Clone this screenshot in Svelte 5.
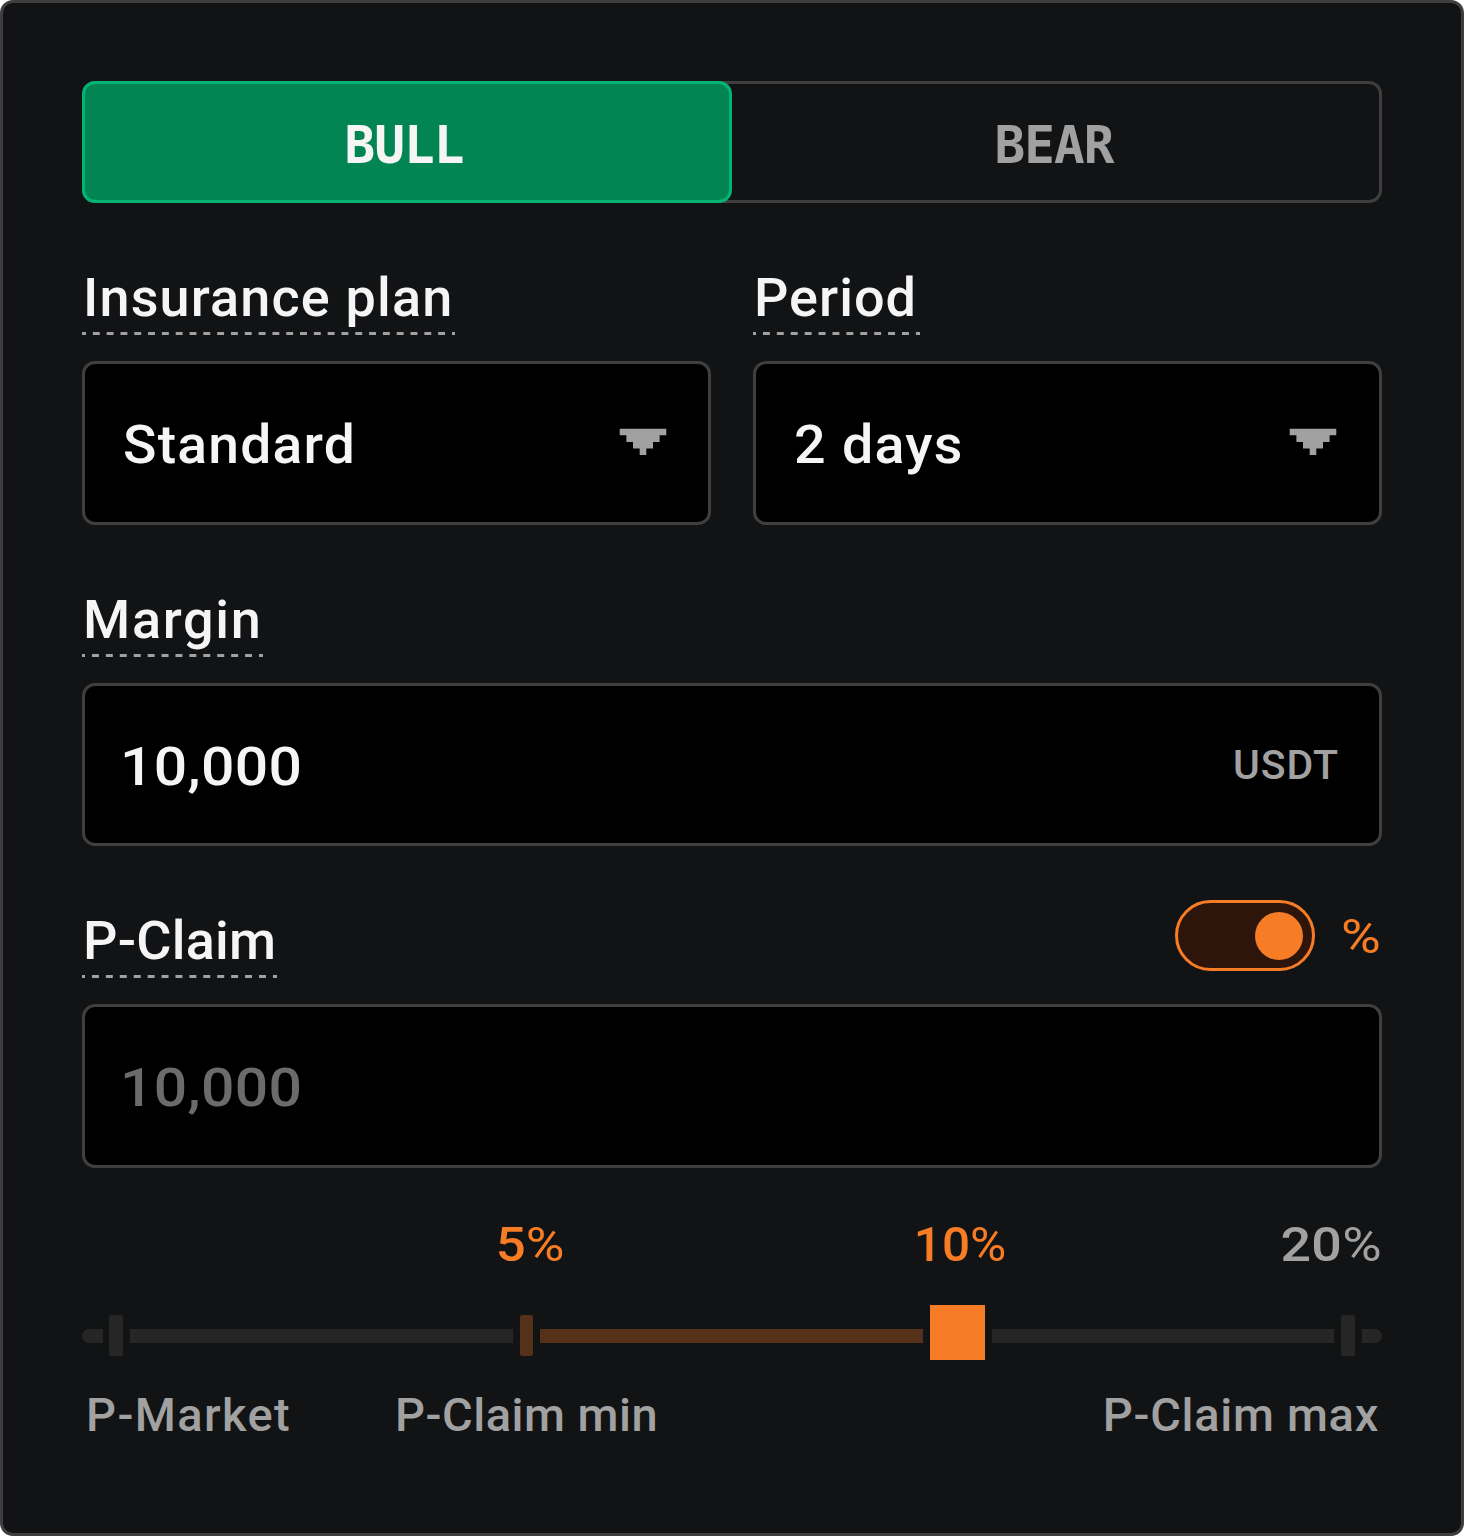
<script>
  let side = $state('bull');
  let percentMode = $state(true);
  let margin = $state('10,000');
</script>

{#snippet arrow()}
  <svg class="arrow" width="48" height="28" viewBox="0 0 48 28" aria-hidden="true">
    <path d="M.7.8H47.3V7.3H40.6V13.9H34V20.5H27.3V27H20.7V20.5H14V13.9H7.4V7.3H.7Z" fill="#a1a1a1" />
  </svg>
{/snippet}

<main class="panel">
  <div class="tabs">
    <button class="tab" class:active={side === 'bull'} onclick={() => (side = 'bull')}>BULL</button>
    <button class="tab" class:active={side === 'bear'} onclick={() => (side = 'bear')}>BEAR</button>
  </div>

  <div class="row">
    <section class="group">
      <div class="label plan"><span>Insurance plan</span></div>
      <button class="field select"><span class="value standard">Standard</span>{@render arrow()}</button>
    </section>
    <section class="group">
      <div class="label period"><span>Period</span></div>
      <button class="field"><span class="value days">2 days</span>{@render arrow()}</button>
    </section>
  </div>

  <section class="group">
    <div class="label margin"><span>Margin</span></div>
    <div class="field amount">
      <span class="value number">{margin}</span>
      <span class="unit">USDT</span>
    </div>
  </section>

  <section class="group">
    <div class="head">
      <div class="label claim"><span>P-Claim</span></div>
      <div class="mode">
        <button
          class="toggle"
          class:off={!percentMode}
          aria-label="Percent mode"
          onclick={() => (percentMode = !percentMode)}
        ><i></i></button>
        <span class="sign">%</span>
      </div>
    </div>
    <div class="field"><span class="value number placeholder">10,000</span></div>
  </section>

  <div class="ticks">
    <span class="pct hot five">5<b>%</b></span>
    <span class="pct hot ten">10<b>%</b></span>
    <span class="pct last">20<b>%</b></span>
  </div>
  <div class="track">
    <i class="bar start"></i>
    <i class="notch"></i>
    <i class="bar long"></i>
    <i class="notch warm"></i>
    <i class="bar long warm"></i>
    <i class="thumb"></i>
    <i class="bar rest"></i>
    <i class="notch"></i>
    <i class="bar end"></i>
  </div>
  <div class="names">
    <span class="market">P-Market</span>
    <span class="min">P-Claim min</span>
    <span class="max">P-Claim max</span>
  </div>
</main>

<style>
  :global(body) {
    margin: 0;
    background: #fff;
  }
  .panel {
    box-sizing: border-box;
    width: 1464px;
    height: 1536px;
    padding: 78px 79px 0;
    border: 3px solid #3f3f3f;
    border-radius: 13px;
    background: #121315;
    color: #f5f5f5;
    font-family: Roboto, 'Liberation Sans', sans-serif;
    font-weight: 500;
    white-space: nowrap;
  }
  button {
    font: inherit;
    color: inherit;
    text-align: left;
    cursor: pointer;
  }
  .tabs {
    display: flex;
    height: 122px;
    margin-bottom: 68px;
    border-radius: 13px;
    box-shadow: inset 0 0 0 3px #3f3f3f;
  }
  .tab {
    flex: 1;
    padding: 6px 0 0;
    border: 3px solid transparent;
    border-radius: 13px;
    background: none;
    color: #a1a1a1;
    font: 700 51px/1 'DejaVu Sans Mono', monospace;
    letter-spacing: -1px;
    text-indent: -6px;
    text-align: center;
  }
  .tab.active {
    border-color: #00b474;
    background: #028553;
    color: #f5f5f5;
  }
  .row {
    display: flex;
    gap: 42px;
  }
  .row .group {
    flex: 1;
  }
  .group {
    margin-bottom: 68px;
  }
  .label {
    box-sizing: border-box;
    height: 64px;
    margin-bottom: 26px;
    padding-left: 1px;
    background: linear-gradient(90deg, #a1a1a1 25%, transparent 25% 75%, #a1a1a1 75%) 0 100% / 13.8px 3px;
    background-repeat: round no-repeat;
    font-size: 54px;
    line-height: 54px;
  }
  .plan { width: 373px; letter-spacing: 1.15px; }
  .period { width: 167px; letter-spacing: 1px; }
  .margin { width: 181px; letter-spacing: 1.7px; }
  .claim { width: 195px; letter-spacing: 0.2px; }
  .field {
    box-sizing: border-box;
    display: flex;
    align-items: center;
    justify-content: space-between;
    width: 100%;
    height: 164px;
    padding: 0 42px 0 38px;
    border: 3px solid #3f3f3f;
    border-radius: 13px;
    background: #000;
  }
  .select {
    padding-right: 41px;
  }
  .amount {
    height: 163px;
    padding-right: 40px;
  }
  .value {
    padding-top: 4px;
    font-size: 54px;
    line-height: 60px;
    letter-spacing: 1.2px;
    transform-origin: 0 50%;
  }
  .standard {
    transform: scaleX(1.022);
  }
  .days {
    transform: scaleX(1.03);
  }
  .number {
    margin-left: -3px;
    letter-spacing: 0.3px;
    transform: scaleX(1.09);
  }
  .placeholder {
    color: #6b6b6b;
  }
  .unit {
    color: #a1a1a1;
    font-size: 41px;
    letter-spacing: 0.9px;
  }
  .arrow {
    display: block;
    margin-bottom: 2px;
  }
  .head {
    display: flex;
    justify-content: space-between;
  }
  .mode {
    display: flex;
    align-items: center;
    gap: 26px;
    height: 71px;
    margin-top: -14px;
  }
  .toggle {
    box-sizing: border-box;
    display: flex;
    align-items: center;
    justify-content: flex-end;
    width: 140px;
    height: 71px;
    padding: 0 9px;
    border: 3px solid #f67c25;
    border-radius: 36px;
    background: #2e150b;
  }
  .toggle.off {
    justify-content: flex-start;
  }
  .toggle i {
    width: 48px;
    height: 48px;
    border-radius: 50%;
    background: #f67c25;
  }
  .sign {
    width: 41px;
    padding-top: 2px;
    color: #f67c25;
    font-size: 48px;
    font-weight: 400;
    transform: scaleX(1.13);
    transform-origin: 0 50%;
  }
  .ticks {
    display: flex;
    margin-top: -16px;
    padding-left: 333px;
    color: #a1a1a1;
    font-size: 48px;
    line-height: 49px;
  }
  .pct {
    width: 230px;
    text-align: center;
  }
  .pct b {
    font-weight: 400;
  }
  .five {
    transform: scaleX(1.1);
  }
  .ten {
    margin-left: 200px;
    transform: scaleX(1.03);
  }
  .hot {
    color: #f67c25;
  }
  .last {
    flex: 1;
    letter-spacing: 0.3px;
    text-align: right;
    transform: scaleX(1.12);
    transform-origin: 100% 50%;
  }
  .track {
    display: flex;
    align-items: center;
    gap: 6.84px;
    height: 55px;
    margin-top: 36px;
  }
  .bar {
    height: 14px;
    margin-top: 7px;
    background: #262626;
  }
  .notch {
    width: 13.7px;
    height: 41px;
    margin-top: 6px;
    border-radius: 2.5px;
    background: #262626;
  }
  .warm {
    background: #56311a;
  }
  .start {
    width: 20.5px;
    border-radius: 7px 0 0 7px;
  }
  .long {
    width: 383.1px;
  }
  .rest {
    flex: 1;
  }
  .end {
    width: 20.5px;
    border-radius: 0 7px 7px 0;
  }
  .thumb {
    width: 55px;
    height: 55px;
    background: #f67c25;
  }
  .names {
    display: flex;
    margin-top: 30px;
    color: #a1a1a1;
    font-size: 47px;
    line-height: 49px;
  }
  .market {
    width: 309px;
    padding-left: 4px;
    letter-spacing: 1.4px;
  }
  .min {
    letter-spacing: 0.5px;
  }
  .max {
    margin-left: auto;
    padding-right: 3px;
    letter-spacing: 0.7px;
  }
</style>
